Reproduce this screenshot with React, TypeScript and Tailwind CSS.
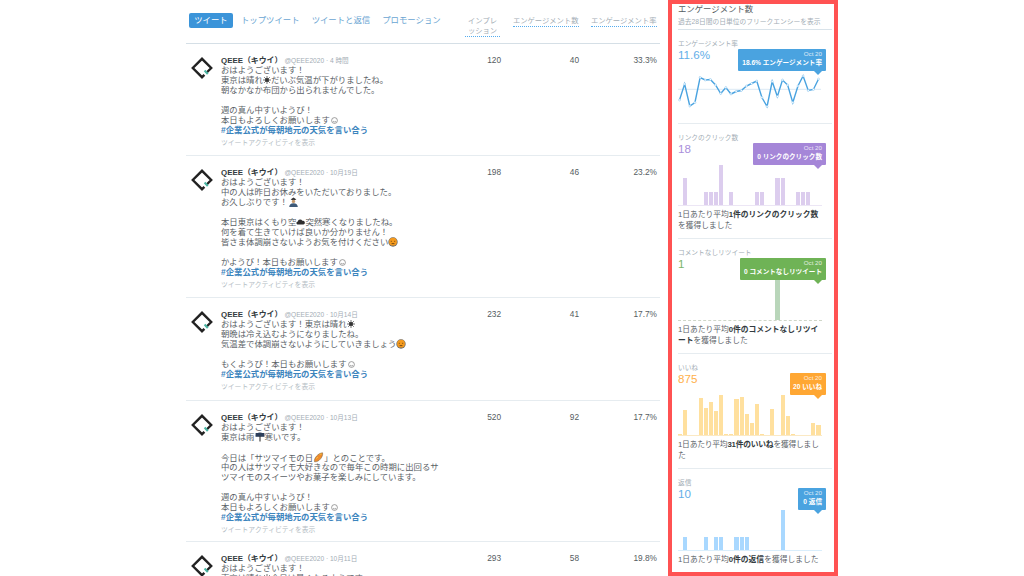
import React from "react";

const FONT = "font-['Liberation_Sans','Noto_Sans_CJK_JP',sans-serif]";

function Logo() {
  return (
    <svg width="22" height="22" viewBox="0 0 22 22" className="shrink-0">
      <path d="M13.4 17.8 L11 20.2 L1.8 11 L11 1.8 L20.2 11 L15.2 16" fill="none" stroke="#222" strokeWidth="2.4" />
      <path d="M13.6 13.6 L16.8 16.9" fill="none" stroke="#4db6a4" strokeWidth="2.2" />
    </svg>
  );
}

function Sun() {
  return (
    <svg width="8" height="8" viewBox="0 0 8 8" className="inline-block align-[-1px]">
      <circle cx="4" cy="4" r="2" fill="#333" />
      <path d="M4 0V8M0 4H8M1.2 1.2L6.8 6.8M6.8 1.2L1.2 6.8" stroke="#333" strokeWidth="0.7" />
    </svg>
  );
}
function Smile() {
  return (
    <svg width="7" height="7" viewBox="0 0 7 7" className="inline-block ml-px align-[-1px]">
      <circle cx="3.5" cy="3.5" r="2.9" fill="#fff" stroke="#777" strokeWidth="0.7" />
      <path d="M2 4.2Q3.5 5.6 5 4.2" fill="none" stroke="#777" strokeWidth="0.6" />
    </svg>
  );
}
function Sad() {
  return (
    <svg width="10" height="10" viewBox="0 0 10 10" className="inline-block align-[-2px]">
      <circle cx="5" cy="5" r="4.7" fill="#6d6d6d" />
      <circle cx="5" cy="4.7" r="3.9" fill="#f59a1d" />
      <path d="M2.8 4.3H3.8M6.2 4.3H7.2M3.6 6.6H6.4" stroke="#5a3a10" strokeWidth="0.8" />
    </svg>
  );
}
function Cloud() {
  return (
    <svg width="9" height="8" viewBox="0 0 9 8" className="inline-block align-[-1px]">
      <path d="M1.5 6.5A1.6 1.6 0 0 1 1.8 3.4 2.4 2.4 0 0 1 6.3 2.8 1.9 1.9 0 0 1 7.4 6.5Z" fill="#2f2f2f" />
    </svg>
  );
}
function Person() {
  return (
    <svg width="11" height="10" viewBox="0 0 11 10" className="inline-block align-[-2px]">
      <path d="M2.6 2.4L5.5 0.6 8.4 2.4 5.5 3.6Z" fill="#333" />
      <circle cx="5.5" cy="4.4" r="1.7" fill="#c79a6b" />
      <path d="M1.2 10Q1.4 6.2 5.5 6.2 9.6 6.2 9.8 10Z" fill="#3f5a78" />
    </svg>
  );
}
function Umbrella() {
  return (
    <svg width="10" height="10" viewBox="0 0 10 10" className="inline-block align-[-2px]">
      <path d="M0.6 4.6A4.4 4 0 0 1 9.4 4.6Z" fill="#2c3e5a" />
      <path d="M0.6 1H9.4V4.6H0.6Z" fill="#2c3e5a" />
      <path d="M5 4V9.6" stroke="#333" strokeWidth="1.1" />
    </svg>
  );
}
function Potato() {
  return (
    <svg width="11" height="11" viewBox="0 0 11 11" className="inline-block align-[-2px]">
      <path d="M1.5 9.8C0.6 6.5 4.8 1.2 9.6 0.8 10.4 4.5 6 10.4 1.5 9.8Z" fill="#ef8b2c" stroke="#6d5a3a" strokeWidth="0.5" />
      <path d="M6.5 2.2L8.6 2M3.4 6.6L4.8 5" stroke="#f7d24a" strokeWidth="0.8" />
    </svg>
  );
}

type Tweet = {
  date: string;
  lines: React.ReactNode[];
  nums: [string, string, string];
  h: string;
  last?: boolean;
};

const tweets: Tweet[] = [
  {
    date: "4 時間",
    nums: ["120", "40", "33.3%"],
    h: "h-[112px]",
    lines: [
      "おはようございます！",
      <>東京は晴れ<Sun />だいぶ気温が下がりましたね。</>,
      "朝なかなか布団から出られませんでした。",
      "",
      "週の真ん中すいようび！",
      <>本日もよろしくお願いします<Smile /></>,
    ],
  },
  {
    date: "10月19日",
    nums: ["198", "46", "23.2%"],
    h: "h-[142px]",
    lines: [
      "おはようございます！",
      "中の人は昨日お休みをいただいておりました。",
      <>お久しぶりです！<Person /></>,
      "",
      <>本日東京はくもり空<Cloud />突然寒くなりましたね。</>,
      "何を着て生きていけば良いか分かりません！",
      <>皆さま体調崩さないようお気を付けください<Sad /></>,
      "",
      <>かようび！本日もお願いします<Smile /></>,
    ],
  },
  {
    date: "10月14日",
    nums: ["232", "41", "17.7%"],
    h: "h-[103px]",
    lines: [
      <>おはようございます！東京は晴れ<Sun /></>,
      "朝晩は冷え込むようになりましたね。",
      <>気温差で体調崩さないようにしていきましょう<Sad /></>,
      "",
      <>もくようび！本日もお願いします<Smile /></>,
    ],
  },
  {
    date: "10月13日",
    nums: ["520", "92", "17.7%"],
    h: "h-[141px]",
    lines: [
      "おはようございます！",
      <>東京は雨<Umbrella />寒いです。</>,
      "",
      <>今日は「サツマイモの日<Potato />」とのことです。</>,
      "中の人はサツマイモ大好きなので毎年この時期に出回るサ",
      "ツマイモのスイーツやお菓子を楽しみにしています。",
      "",
      "週の真ん中すいようび！",
      <>本日もよろしくお願いします<Smile /></>,
    ],
  },
  {
    date: "10月11日",
    nums: ["293", "58", "19.8%"],
    h: "h-[60px]",
    last: true,
    lines: [
      "おはようございます！",
      <>東京は晴れ<Sun />今日は暑くなるようです。</>,
    ],
  },
];

function TweetRow({ t }: { t: Tweet }) {
  return (
    <div className={`flex ${t.h} ${t.last ? "" : "border-b border-[#e6ecf0]"} overflow-hidden pt-[12px]`}>
      <div className="w-[35px] shrink-0 pl-[5px] pt-[1px]">
        <Logo />
      </div>
      <div className="w-[243px] shrink-0">
        <div className="flex items-baseline h-[10px] leading-[10px]">
          <span className="text-[7.9px] font-bold text-[#333b40]">QEEE（キウイ）</span>
          <span className="text-[6.6px] text-[#a3adb5] ml-[2px]">@QEEE2020 · {t.date}</span>
        </div>
        <div className="-mt-px text-[8.4px] leading-[10px] text-[#5a6166]">
          {t.lines.map((l, i) => (
            <div key={i} className="h-[10px] whitespace-nowrap">{l}</div>
          ))}
          {!t.last && <div className="h-[10px] font-bold text-[#3b84bd] whitespace-nowrap">#企業公式が毎朝地元の天気を言い合う</div>}
        </div>
        {!t.last && <div className="mt-[4px] text-[6.8px] leading-[8px] text-[#b4bdc4]">ツイートアクティビティを表示</div>}
      </div>
      <div className="w-[37px] -mt-px text-right text-[8.3px] leading-[10px] text-[#555c61]">{t.nums[0]}</div>
      <div className="w-[78px] -mt-px text-right text-[8.3px] leading-[10px] text-[#555c61]">{t.nums[1]}</div>
      <div className="w-[78px] -mt-px text-right text-[8.3px] leading-[10px] text-[#555c61]">{t.nums[2]}</div>
    </div>
  );
}

function Tabs() {
  return (
    <div className="flex items-center h-[44px] border-b border-[#d5dfe6]">
      <div className="flex items-center pl-[3px] gap-[12px] w-[279px] pb-[3px]">
        <span className="flex items-center justify-center w-[44px] h-[15px] bg-[#3b94d9] rounded-[2px] text-white text-[8.4px]">ツイート</span>
        <span className="text-[8.4px] text-[#6aa5d2] -ml-[4px]">トップツイート</span>
        <span className="text-[8.4px] text-[#6aa5d2]">ツイートと返信</span>
        <span className="text-[8.4px] text-[#6aa5d2]">プロモーション</span>
      </div>
      <div className="flex self-start pt-[16px] text-[7.3px] leading-[10px] text-[#a3adb5]">
        <div className="w-[35px] h-[21px] text-center border-b border-dotted border-[#55acee]">
          インプレ<br />ッション
        </div>
        <div className="w-[78.5px] flex justify-end">
          <span className="border-b border-dotted border-[#55acee] h-[11px]">エンゲージメント数</span>
        </div>
        <div className="w-[78px] flex justify-end">
          <span className="border-b border-dotted border-[#55acee] h-[11px]">エンゲージメント率</span>
        </div>
      </div>
    </div>
  );
}

const lineYs = [100, 84, 106, 102.5, 77.5, 80, 79.5, 85, 93.5, 87.5, 94, 91.5, 90.5, 86, 83.5, 81, 97.5, 106.5, 81.5, 96.5, 80, 85, 102.5, 86, 76, 90.5, 89.5, 79];

function LineChart() {
  const pts = lineYs.map((y, i) => [1.5 + i * 5.15, y - 71] as const);
  return (
    <svg width="146" height="42" viewBox="0 0 146 42" className="block">
      <path d="M0 18.3H143" stroke="#dbe9f4" strokeWidth="1" />
      <polyline points={pts.map((p) => p.join(",")).join(" ")} fill="none" stroke="#4aa3e0" strokeWidth="1.4" />
      {pts.map((p, i) => (
        <circle key={i} cx={p[0]} cy={p[1]} r="1" fill="#fff" stroke="#8cc6ee" strokeWidth="0.5" />
      ))}
    </svg>
  );
}

function Bars({ data, color, base }: { data: number[]; color: string; base: string }) {
  return (
    <div className={`flex items-end h-[41px] w-[144px] border-b ${base}`}>
      {data.map((v, i) => (
        <div key={i} className="w-[5.14px] shrink-0 pr-[0.9px]">
          <div className={color} style={{ height: v }} />
        </div>
      ))}
    </div>
  );
}

function Tip({ date, text, bg, arrow, w }: { date: string; text: string; bg: string; arrow: string; w: string }) {
  return (
    <div className={`absolute right-0 top-0 ${w} h-[22px] ${bg} rounded-[1px] text-right pr-[3.5px] pt-[1.5px] text-white`}>
      <div className="text-[6.2px] leading-[7.5px] opacity-80">{date}</div>
      <div className="text-[6.6px] leading-[10px] font-bold whitespace-nowrap">{text}</div>
      <div className={`absolute right-[3.5px] -bottom-[4px] w-0 h-0 border-x-[4px] border-x-transparent border-t-[4px] ${arrow}`} />
    </div>
  );
}

function Stat({
  label, value, valueColor, tip, chart, text, divider = true, h,
}: {
  label: string; value: string; valueColor: string; tip: React.ReactNode; chart: React.ReactNode; text: React.ReactNode; divider?: boolean; h: string;
}) {
  return (
    <div className={`${h} ${divider ? "border-b border-[#e6ecf0]" : ""} relative pt-[9px]`}>
      <div className="text-[6.7px] leading-[9px] text-[#a3adb5] whitespace-nowrap">{label}</div>
      <div className={`text-[11.6px] leading-[13px] ${valueColor}`}>{value}</div>
      <div className="absolute top-[18.5px] right-[6px]">{tip}</div>
      <div className="mt-[9.5px]">{chart}</div>
      {text && <div className="mt-[3.7px] whitespace-nowrap text-[7.75px] leading-[11px] text-[#5c6369]">{text}</div>}
    </div>
  );
}

const link = [0, 27, 0, 0, 0, 13, 13, 13, 40, 0, 13, 0, 0, 0, 0, 13, 13, 0, 0, 27, 27, 0, 0, 13, 13, 13, 0, 0];
const rt = [0, 0, 0, 0, 0, 0, 0, 0, 0, 0, 0, 0, 0, 0, 0, 0, 0, 0, 0, 40, 0, 0, 0, 0, 0, 0, 0, 0];
const likes = [1, 25, 0, 0, 37, 27, 33, 24, 40, 1, 1, 36, 38, 21, 12, 31, 1, 0, 26, 0, 40, 19, 1, 0, 0, 0, 12, 10];
const replies = [0, 13, 0, 0, 0, 13, 0, 13, 13, 0, 0, 13, 13, 13, 0, 0, 0, 0, 0, 0, 40, 0, 0, 0, 0, 0, 0, 0];

export default function App() {
  return (
    <div className={`${FONT} h-[576px] w-[1024px] overflow-hidden bg-white flex`}>
      <div className="ml-[186px] w-[474px] shrink-0">
        <Tabs />
        {tweets.map((t, i) => (
          <TweetRow key={i} t={t} />
        ))}
      </div>
      <div className="ml-[8px] w-[170px] h-[576px] shrink-0 border-[4.5px] border-[#ff5252] pl-[6px] pr-[2.5px] overflow-hidden">
        <div className="h-[26px] border-b border-[#d9e3ea]">
          <div className="text-[8.4px] leading-[10px] text-[#555c61]">エンゲージメント数</div>
          <div className="text-[6.75px] leading-[10px] text-[#a3adb5] mt-[2.5px] whitespace-nowrap">過去28日間の日単位のフリークエンシーを表示</div>
        </div>
        <Stat
          h="h-[94px]"
          label="エンゲージメント率"
          value="11.6%"
          valueColor="text-[#64aee8]"
          tip={<Tip date="Oct 20" text="18.6% エンゲージメント率" w="w-[88px]" bg="bg-[#4aa3e0]" arrow="border-t-[#4aa3e0]" />}
          chart={<LineChart />}
          text={null}
        />
        <Stat
          h="h-[115px]"
          label="リンクのクリック数"
          value="18"
          valueColor="text-[#a98edb]"
          tip={<Tip date="Oct 20" text="0 リンクのクリック数" w="w-[73px]" bg="bg-[#a586d8]" arrow="border-t-[#a586d8]" />}
          chart={<Bars data={link} color="bg-[#dccdee]" base="border-[#ece6f5]" />}
          text={<>1日あたり平均<b className="text-[#333b40]">1件のリンクのクリック数</b><br />を獲得しました</>}
        />
        <Stat
          h="h-[115px]"
          label="コメントなしリツイート"
          value="1"
          valueColor="text-[#7cb56a]"
          tip={<Tip date="Oct 20" text="0 コメントなしリツイート" w="w-[86px]" bg="bg-[#6fb356]" arrow="border-t-[#6fb356]" />}
          chart={<Bars data={rt} color="bg-[#b9d6ba]" base="border-dashed border-[#cfd6c8]" />}
          text={<>1日あたり平均<b className="text-[#333b40]">0件のコメントなしリツイ<br />ート</b>を獲得しました</>}
        />
        <Stat
          h="h-[115px]"
          label="いいね"
          value="875"
          valueColor="text-[#ffb04a]"
          tip={<Tip date="Oct 20" text="20 いいね" w="w-[36px]" bg="bg-[#ffa733]" arrow="border-t-[#ffa733]" />}
          chart={<Bars data={likes} color="bg-[#ffe09e]" base="border-[#fbe9c4]" />}
          text={<span className="tracking-[-0.2px]">1日あたり平均<b className="text-[#333b40]">31件のいいね</b>を獲得しまし<br />た</span>}
        />
        <Stat
          h="h-[104px]"
          divider={false}
          label="返信"
          value="10"
          valueColor="text-[#64aee8]"
          tip={<Tip date="Oct 20" text="0 返信" w="w-[28px]" bg="bg-[#4aa3e0]" arrow="border-t-[#4aa3e0]" />}
          chart={<Bars data={replies} color="bg-[#a9d8ff]" base="border-[#d9eefc]" />}
          text={<>1日あたり平均<b className="text-[#333b40]">0件の返信</b>を獲得しました</>}
        />
      </div>
    </div>
  );
}
